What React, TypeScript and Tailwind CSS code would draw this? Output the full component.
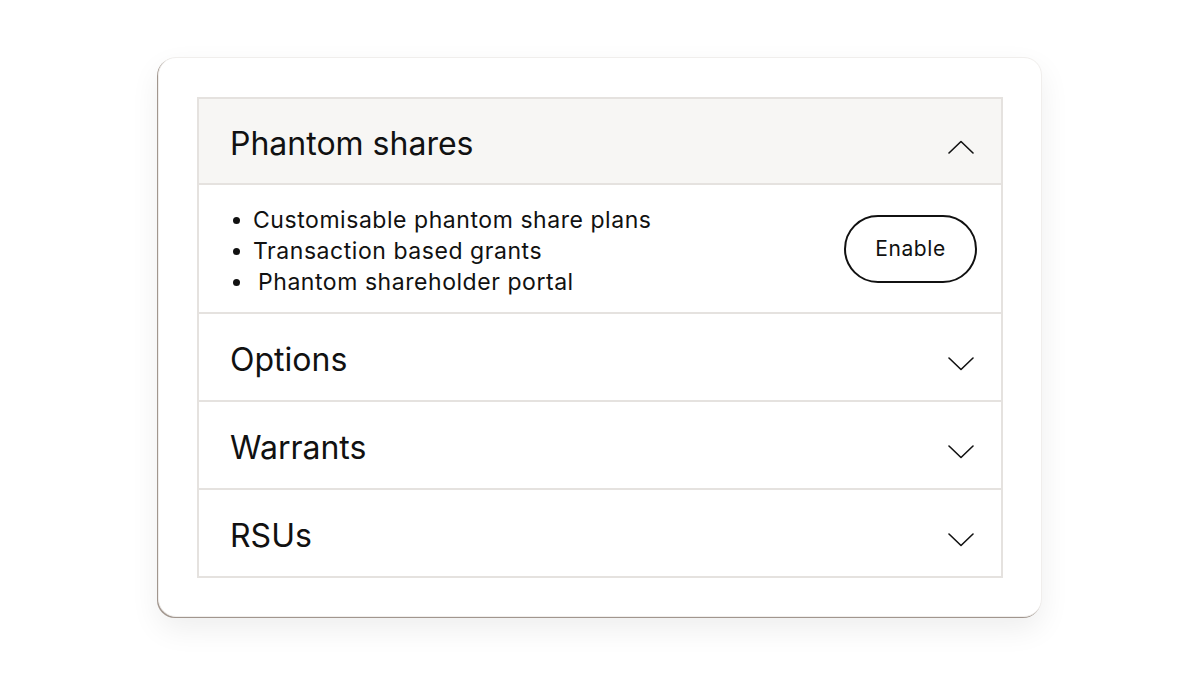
import React from "react";

const font = { fontFamily: "Inter, 'Noto Sans', sans-serif" };

function Chevron({ up }: { up?: boolean }) {
  return (
    <svg width="26" height="14" viewBox="0 0 26 14" fill="none" className="shrink-0">
      <path
        d={up ? "M1 13L13 1.5L25 13" : "M1 1L13 12.5L25 1"}
        stroke="#111"
        strokeWidth="1.6"
        strokeLinecap="round"
        strokeLinejoin="round"
      />
    </svg>
  );
}

const rows = ["Options", "Warrants", "RSUs"];

export default function App() {
  return (
    <div className="w-[1200px] h-[675px] bg-white flex items-center justify-center pb-[2px]" style={font}>
      <div className="w-[884px] bg-white rounded-[18px] border border-[#f0eeec] shadow-[-1px_1px_0_0_#a1968e,0_12px_30px_rgba(0,0,0,0.07)] pt-[39px] px-[38px] pb-[38px]">
        <div className="border-2 border-[#e5e2df] flex flex-col">
          <div className="h-[86px] bg-[#f7f6f4] flex items-center justify-between pl-[31px] pr-[27px] border-b-2 border-[#e5e2df]">
            <span className="text-[32px] text-[#111] pt-[6px]">Phantom shares</span>
            <div className="pt-[12px]">
              <Chevron up />
            </div>
          </div>
          <div className="h-[129px] flex items-center justify-between pl-[31px] pr-[24px] border-b-2 border-[#e5e2df]">
            <ul className="text-[23px] leading-[31px] text-[#111] tracking-[0.55px] pt-[6px]">
              <li className="flex items-center gap-[13px]">
                <span className="w-[7px] h-[7px] rounded-full bg-[#111] ml-[3px]" />
                Customisable phantom share plans
              </li>
              <li className="flex items-center gap-[13px]">
                <span className="w-[7px] h-[7px] rounded-full bg-[#111] ml-[3px]" />
                Transaction based grants
              </li>
              <li className="flex items-center gap-[18px]">
                <span className="w-[7px] h-[7px] rounded-full bg-[#111] ml-[3px]" />
                Phantom shareholder portal
              </li>
            </ul>
            <button className="w-[133px] h-[68px] rounded-full border-2 border-[#111] text-[21px] tracking-[0.6px] text-[#111] mt-[2px]">
              Enable
            </button>
          </div>
          {rows.map((r, i) => (
            <div
              key={r}
              className={`flex items-center justify-between pl-[31px] pr-[27px] ${
                i < rows.length - 1 ? "h-[88px] border-b-2 border-[#e5e2df]" : "h-[86px]"
              }`}
            >
              <span className="text-[32px] text-[#111] pt-[6px]">{r}</span>
              <div className="pt-[14px]">
                <Chevron />
              </div>
            </div>
          ))}
        </div>
      </div>
    </div>
  );
}
